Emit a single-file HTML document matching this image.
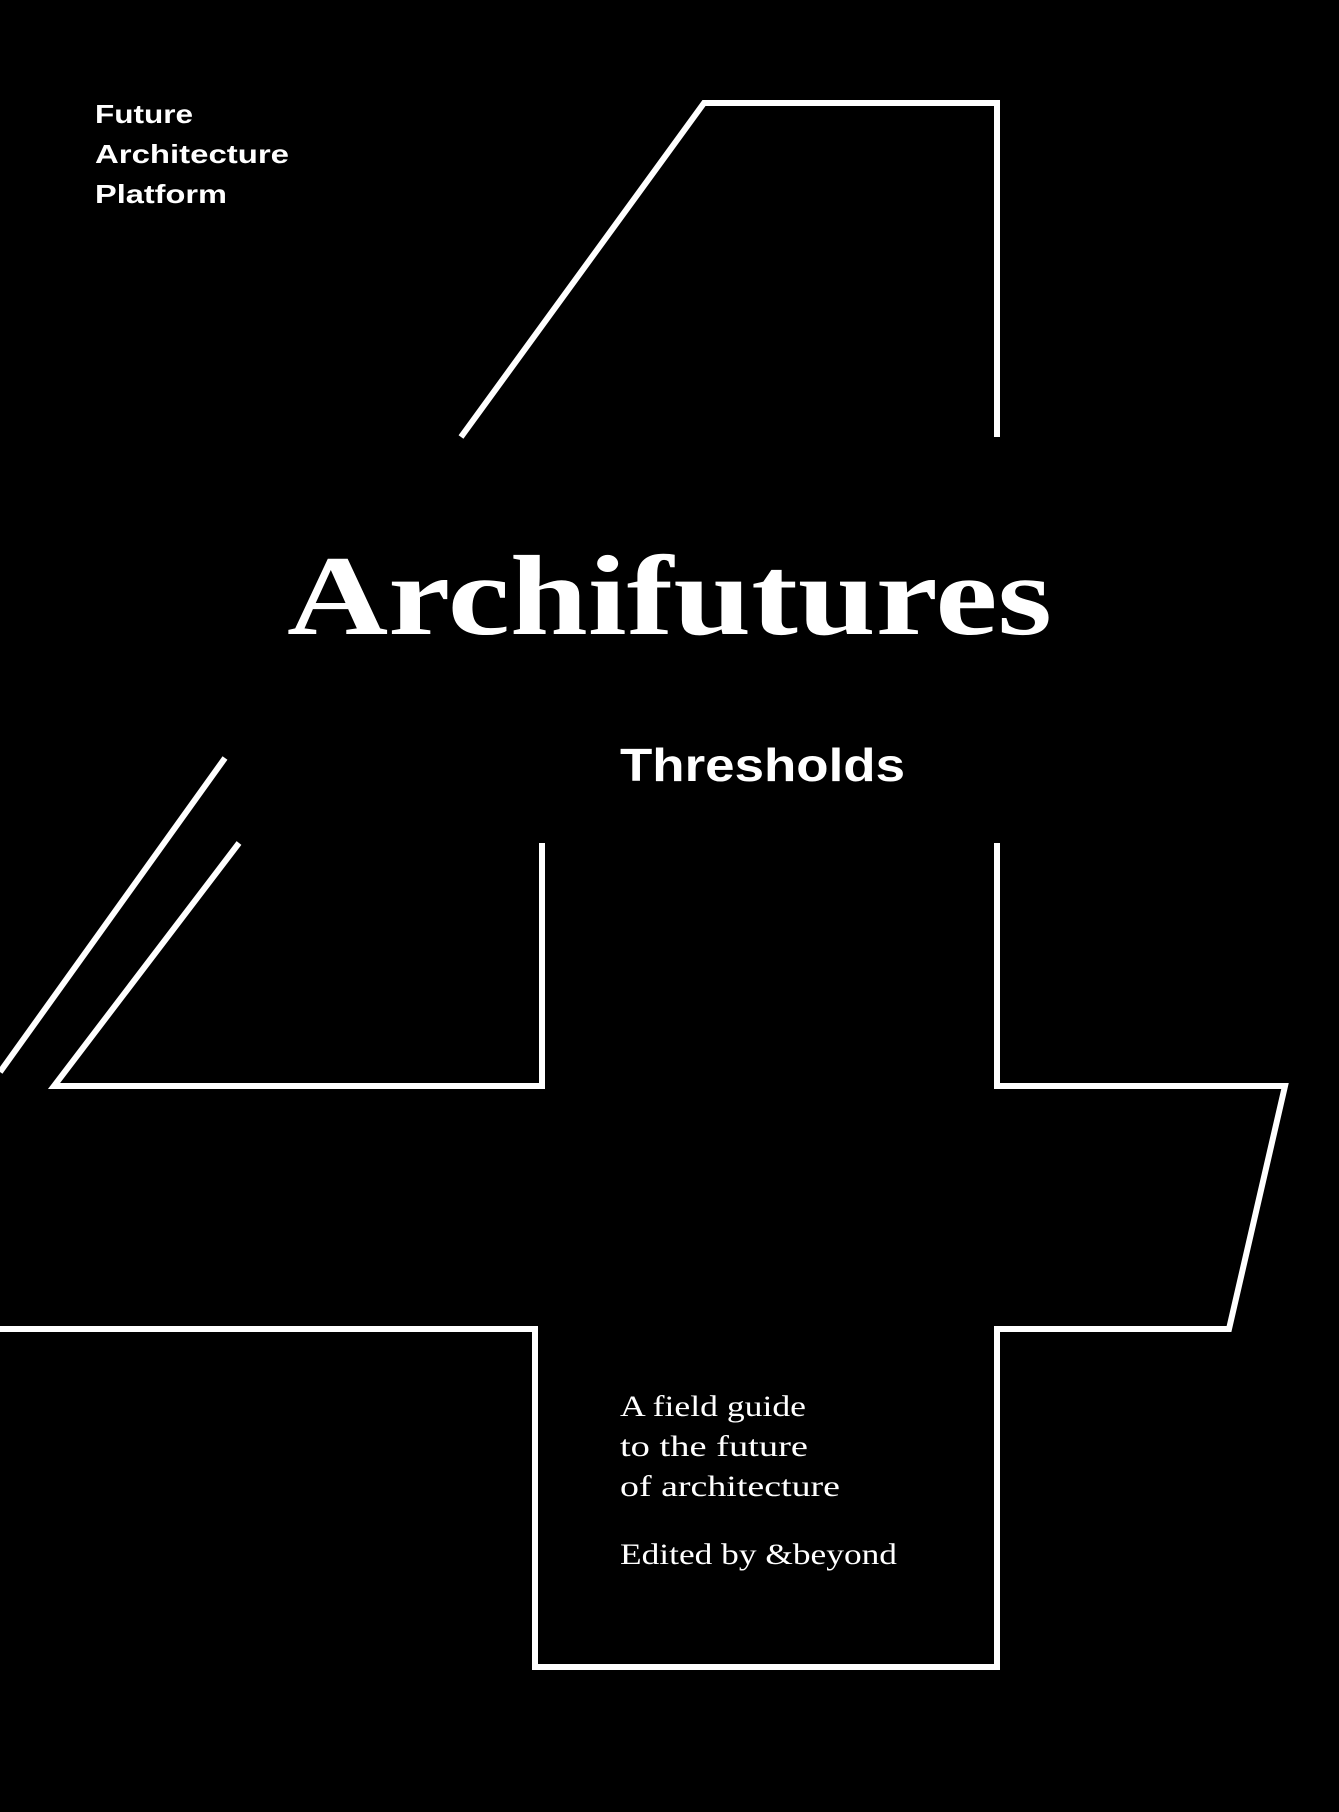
<!DOCTYPE html>
<html><head><meta charset="utf-8"><style>html,body{margin:0;padding:0;background:#000}svg{display:block}</style></head>
<body>
<svg width="1339" height="1812" viewBox="0 0 1339 1812" xmlns="http://www.w3.org/2000/svg">
<rect width="1339" height="1812" fill="#000"/>
<g fill="none" stroke="#fff" stroke-width="6" stroke-linejoin="miter">
<polyline points="461,437 704,103 997,103 997,437"/>
<polyline points="225,758 0,1072"/>
<polyline points="239,843 54,1086 542,1086 542,843"/>
<polyline points="997,843 997,1086 1285,1086 1229,1329 997,1329 997,1667 535,1667 535,1329 0,1329"/>
</g>
<g fill="#fff" font-family="Liberation Sans, sans-serif" font-weight="bold">
<text x="95" y="123" font-size="26" textLength="98" lengthAdjust="spacingAndGlyphs">Future</text>
<text x="95" y="163" font-size="26" textLength="194" lengthAdjust="spacingAndGlyphs">Architecture</text>
<text x="95" y="203" font-size="26" textLength="132" lengthAdjust="spacingAndGlyphs">Platform</text>
<text x="620" y="781" font-size="46" textLength="285" lengthAdjust="spacingAndGlyphs">Thresholds</text>
</g>
<text x="287" y="634" fill="#fff" font-family="Liberation Serif, serif" font-weight="bold" font-size="114" textLength="765" lengthAdjust="spacingAndGlyphs">Archifutures</text>
<g fill="#fff" font-family="Liberation Serif, serif" font-size="30">
<text x="620" y="1416" textLength="186" lengthAdjust="spacingAndGlyphs">A field guide</text>
<text x="620" y="1456" textLength="188" lengthAdjust="spacingAndGlyphs">to the future</text>
<text x="620" y="1496" textLength="220" lengthAdjust="spacingAndGlyphs">of architecture</text>
<text x="620" y="1564" textLength="277" lengthAdjust="spacingAndGlyphs">Edited by &amp;beyond</text>
</g>
</svg>
</body></html>
